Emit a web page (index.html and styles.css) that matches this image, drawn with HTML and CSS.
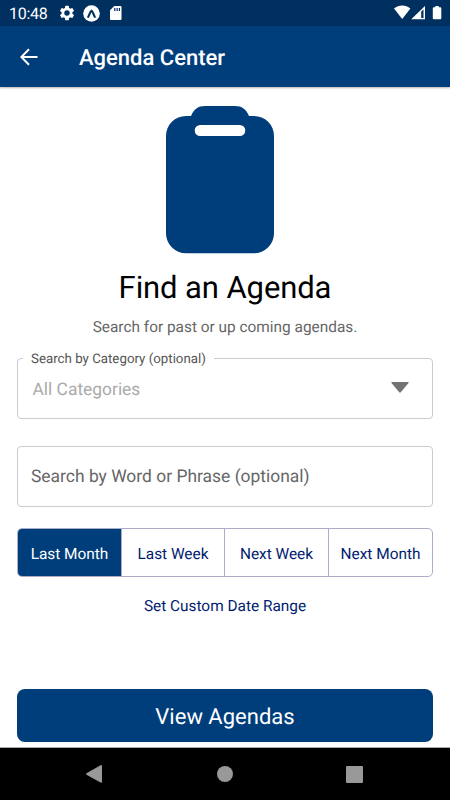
FILE: index.html
```html
<!DOCTYPE html>
<html lang="en">
<head>
<meta charset="utf-8">
<title>Agenda Center</title>
<link rel="stylesheet" href="styles.css">
</head>
<body>
<div class="screen">
  <div class="status">
    <span class="clock">10:48</span>
    <svg class="gear" width="18" height="18" viewBox="0 0 24 24"><path fill="#fff" d="M19.14 12.94c.04-.3.06-.61.06-.94s-.02-.64-.07-.94l2.03-1.58a.49.49 0 0 0 .12-.61l-1.92-3.32a.49.49 0 0 0-.59-.22l-2.39.96a7 7 0 0 0-1.62-.94l-.36-2.54a.48.48 0 0 0-.48-.41h-3.84a.47.47 0 0 0-.47.41l-.36 2.54a7.2 7.2 0 0 0-1.62.94l-2.39-.96a.48.48 0 0 0-.59.22L2.73 8.87a.47.47 0 0 0 .12.61l2.03 1.58a6 6 0 0 0 0 1.88l-2.03 1.58a.49.49 0 0 0-.12.61l1.92 3.32c.12.22.37.29.59.22l2.39-.96c.5.38 1.03.7 1.62.94l.36 2.54c.05.24.24.41.48.41h3.84c.24 0 .44-.17.47-.41l.36-2.54a6.8 6.8 0 0 0 1.62-.94l2.39.96c.22.08.47 0 .59-.22l1.92-3.32a.47.47 0 0 0-.12-.61zM12 15.6a3.6 3.6 0 1 1 0-7.2 3.6 3.6 0 0 1 0 7.2"/></svg>
    <svg class="expo" width="17" height="17" viewBox="0 0 17 17"><circle cx="8.5" cy="8.5" r="8.3" fill="#fff"/><path d="M5.2 11.8C6.6 10 7.1 6.3 8.5 5.6c1.4.7 1.9 4.400 3.300 6.200" fill="none" stroke="#003060" stroke-width="2.100" stroke-linecap="round"/></svg>
    <svg class="sd" width="12" height="14" viewBox="0 0 12 14"><path fill="#fff" d="M4.300 0H10.500Q11.500 0 11.500 1V13Q11.500 14 10.500 14H1Q0 14 0 13V4.300Z"/><path stroke="#003060" stroke-width="1.200" d="M4.800 2v3M7.100 2v3M9.400 2v3"/></svg>
    <svg class="signals" width="50" height="16" viewBox="0 0 50 16"><path fill="#fff" d="M0 3.600C4.700-.4 11.700-.4 16.400 3.600L8.200 14Z"/><path fill="#fff" fill-rule="evenodd" d="M17.200 14.200L31 1V14.200ZM27.200 6.400V13H29.500V4.400Z"/><path fill="#fff" d="M41.300 1H44.800V2.200H46.300Q47.300 2.200 47.300 3.200V13.200Q47.300 14.200 46.300 14.200H39.800Q38.800 14.200 38.800 13.200V3.200Q38.800 2.200 39.800 2.200H41.300Z"/></svg>
  </div>
  <header class="appbar">
    <svg class="back" width="18" height="18" viewBox="0 0 18 18"><path d="M17.500 9H1.500M9 1.300L1.300 9L9 16.700" fill="none" stroke="#fff" stroke-width="2"/></svg>
    <h1>Agenda Center</h1>
  </header>
  <main>
    <svg class="clipboard" width="108" height="148" viewBox="0 0 108 148"><path fill="#003e7b" fill-rule="evenodd" d="M20 10H25C28 3 32 0 39 0H69C76 0 80 3 83 10H88A20 20 0 0 1 108 30V127A20 20 0 0 1 88 147.300H20A20 20 0 0 1 0 127V30A20 20 0 0 1 20 10ZM34.200 19A5.500 5.500 0 0 0 34.200 30H73.800A5.500 5.500 0 0 0 73.800 19Z"/></svg>
    <h2>Find an Agenda</h2>
    <p class="lead">Search for past or up coming agendas.</p>
    <div class="field category">
      <span class="label">Search by Category (optional)</span>
      <span class="value">All Categories</span>
      <svg class="caret" width="18" height="11" viewBox="0 0 18 11"><path d="M.8 0H17.200Q18 .2 17.500 1L9.800 10.300Q9 11.200 8.200 10.300L.5 1Q0 .2.8 0Z" fill="#747474"/></svg>
    </div>
    <div class="field phrase"><span>Search by Word or Phrase (optional)</span></div>
    <div class="segments">
      <div class="segment active">Last Month</div>
      <div class="segment">Last Week</div>
      <div class="segment">Next Week</div>
      <div class="segment">Next Month</div>
    </div>
    <div class="custom">Set Custom Date Range</div>
    <div class="submit">View Agendas</div>
  </main>
  <nav class="navbar">
    <svg width="16" height="18" viewBox="0 0 16 18"><path d="M15 0Q16 0 16 1V17Q16 18 15 17.800L.5 9.700Q-.3 9 .5 8.300Z" fill="#999"/></svg>
    <svg class="home" width="16" height="16" viewBox="0 0 16 16"><circle cx="8" cy="8" r="8" fill="#999"/></svg>
    <svg width="17" height="17" viewBox="0 0 17 17"><rect width="17" height="17" rx="1" fill="#999"/></svg>
  </nav>
</div>
</body>
</html>
```
FILE: styles.css
```css
* { box-sizing: border-box; }
body { margin: 0; font-family: Roboto, "Liberation Sans", sans-serif; background: #fff; text-rendering: geometricPrecision; }
svg { display: block; flex: none; }
.screen { width: 450px; height: 800px; display: flex; flex-direction: column; overflow: hidden; white-space: nowrap; }
.status { height: 26px; flex: none; background: #003060; display: flex; align-items: center; padding: 0 0 0 9px; color: #fff; }
.clock { width: 49px; font-size: 16px; line-height: 26px; padding-top: 2px; font-weight: 400; letter-spacing: -.3px; }
.gear { margin-right: 7px; }
.expo { margin-right: 10px; }
.signals { margin: 0 6px 0 auto; }
.appbar { height: 61px; flex: none; background: #003e7b; display: flex; align-items: center; padding-left: 20px; color: #fff; box-shadow: 0 1px 2px rgba(0, 0, 0, .3); }
h1 { margin: 5px 0 0 41px; font-size: 22px; font-weight: 500; line-height: 28px; }
main { flex: 1; padding: 19px 17px 0; display: flex; flex-direction: column; }
.clipboard { align-self: center; margin-right: 10px; margin-left: 0; }
h2 { margin: 15px 0 0; text-align: center; font-size: 31px; font-weight: 400; line-height: 38px; color: #000; letter-spacing: -.1px; }
.lead { margin: 10px 0 0; text-align: center; font-size: 15.400px; line-height: 20px; color: #666; }
.field { height: 61px; flex: none; border: 1px solid #ccc; border-radius: 4px; display: flex; align-items: center; position: relative; }
.category { margin-top: 21px; padding: 0 23px 0 14.500px; }
.label { position: absolute; left: 5px; top: -7px; padding: 0 8px; background: #fff; font-size: 13.300px; line-height: 16px; color: #555; }
.value { font-size: 17.400px; color: #aaa; padding-top: 2px; }
.caret { margin-left: auto; margin-top: -3px; }
.phrase { margin-top: 27px; padding-left: 13px; font-size: 17.450px; color: #666; }
.phrase span { padding-top: 1px; }
.segments { margin-top: 21px; height: 49px; flex: none; display: grid; grid-template-columns: 103px 103px 104px 1fr; border: 1px solid #aaacc8; border-radius: 5px; overflow: hidden; }
.segment { display: flex; align-items: center; justify-content: center; font-size: 15.400px; color: #001c70; border-left: 1px solid #aaacc8; padding-top: 2px; }
.active { background: #003e7b; color: #fff; border-left: 0; }
.custom { margin-top: 19px; text-align: center; font-size: 15.400px; line-height: 20px; color: #001c70; }
.submit { margin-top: 73px; height: 53px; flex: none; border-radius: 8px; background: #003e7b; color: #fff; display: flex; align-items: center; justify-content: center; font-size: 22px; padding-top: 4px; }
.navbar { height: 53px; flex: none; background: #000; border-top: 1px solid #aaa; display: flex; align-items: center; justify-content: space-between; padding: 0 87px 0 86px; }
.home { margin-left: 1px; }
```
